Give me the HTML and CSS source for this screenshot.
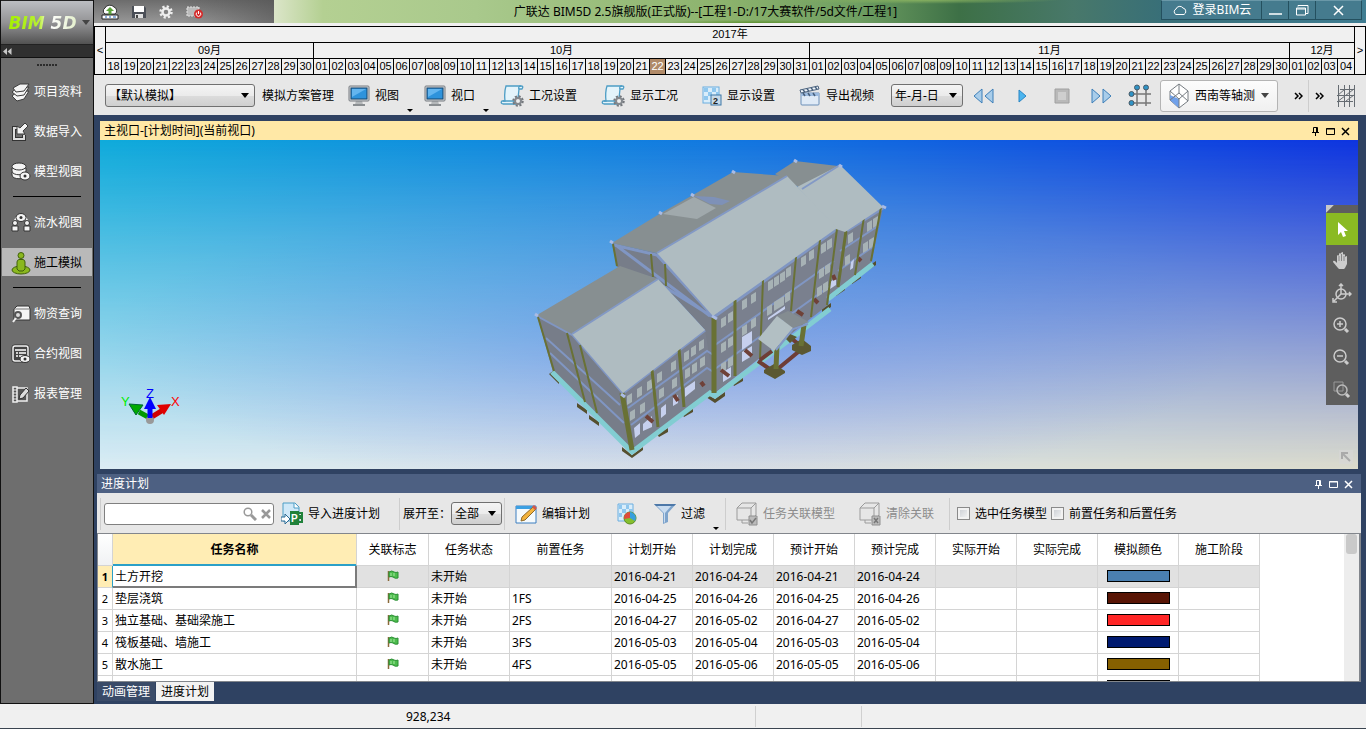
FILE: index.html
```html
<!DOCTYPE html>
<html lang="zh-CN">
<head>
    <meta charset="utf-8">
    <title>广联达 BIM5D 2.5旗舰版</title>
    <link rel="stylesheet" href="styles.css">
</head>
<body>
    <div class="app">
        <nav class="sidebar">
            <button class="logo"><span class="logo-text">BIM 5D</span><span class="caret"></span></button>
            <button class="collapse" aria-label="收起">
                <svg width="9" height="7" viewBox="0 0 9 7"><path d="M4 0v7L0 3.500zM8.500 0v7l-4-3.500z" fill="#c8c8c8"/></svg>
            </button>
            <div class="grip"></div>
            <a class="nav-item" href="#">
                <svg width="20" height="20" viewBox="0 0 20 20"><g fill="#f4f4f4" stroke="#3c3c3c"><path d="M1 14l5-4 12-1-5 8-7 2z"/><path d="M1 10l5-4 12-1-5 8-7 1z"/><path d="M2 6l7-4 9 0-5 7-8 1z"/></g></svg>
                项目资料
            </a>
            <a class="nav-item" href="#">
                <svg width="20" height="20" viewBox="0 0 20 20"><path d="M6 6H3v11h10v-4" fill="none" stroke="#333" stroke-width="4"/><path d="M6 6H3v11h10v-4" fill="none" stroke="#ddd" stroke-width="2"/><path d="M14 1l3 3-5 5 2 3H6V4l3 2z" fill="#f4f4f4" stroke="#3c3c3c"/></svg>
                数据导入
            </a>
            <a class="nav-item" href="#">
                <svg width="20" height="20" viewBox="0 0 20 20"><g fill="#f4f4f4" stroke="#333"><path d="M1 13c0 5 14 5 14 0v-3H1z"/><path d="M1 9c0 5 14 5 14 0V6H1z"/><ellipse cx="8" cy="4.500" rx="7" ry="3.500"/><ellipse cx="14" cy="14" rx="5" ry="4"/></g><circle cx="14" cy="14" r="1.500" fill="#333"/></svg>
                模型视图
            </a>
            <hr class="nav-line">
            <a class="nav-item" href="#">
                <svg width="20" height="20" viewBox="0 0 20 20"><path d="M3 9l3-5M17 9l-3-5" stroke="#eee" stroke-width="2"/><g fill="#f4f4f4" stroke="#333"><ellipse cx="10" cy="4.500" rx="5" ry="4"/><circle cx="4" cy="10" r="2.500"/><circle cx="16" cy="10" r="2.500"/><path d="M1 13h6v5H1zM13 13h6v5h-6z"/></g><circle cx="10" cy="4.500" r="1.500" fill="#333"/></svg>
                流水视图
            </a>
            <a class="nav-item active" href="#">
                <svg width="20" height="24" viewBox="0 0 20 24"><ellipse cx="10" cy="19" rx="9" ry="4" fill="#8ab81e" stroke="#41600b"/><path d="M6 18V11q0-2 2-2.500h4q2 .500 2 2.500v7l-2 2H8z" fill="#8ab81e" stroke="#41600b"/><circle cx="10" cy="4.500" r="3" fill="#8ab81e" stroke="#41600b"/></svg>
                施工模拟
            </a>
            <hr class="nav-line">
            <a class="nav-item" href="#">
                <svg width="20" height="20" viewBox="0 0 20 20"><path d="M3 5l3-3h12l1 3v11H3z" fill="#f4f4f4" stroke="#333"/><path d="M3 5h15" stroke="#777"/><circle cx="7" cy="11" r="3" fill="#ddd" stroke="#555" stroke-width="2"/><path d="M5 14l-3 4" stroke="#eee" stroke-width="2"/></svg>
                物资查询
            </a>
            <a class="nav-item" href="#">
                <svg width="20" height="20" viewBox="0 0 20 20"><rect x="2" y="2" width="15" height="15" rx="2" fill="none" stroke="#333" stroke-width="3"/><rect x="2" y="2" width="15" height="15" rx="2" fill="#444" stroke="#f4f4f4" stroke-width="1.500"/><path d="M4 6h11M5 9h2M8 9h7M5 12h2M8 12h5" stroke="#fff" stroke-width="1.500"/><ellipse cx="14" cy="15" rx="5" ry="3.500" fill="#f4f4f4" stroke="#333"/><circle cx="14" cy="15" r="1.500" fill="#333"/></svg>
                合约视图
            </a>
            <a class="nav-item" href="#">
                <svg width="20" height="20" viewBox="0 0 20 20"><path d="M2 3h4v15H2zM6 4h10v13H6z" fill="#555" stroke="#f0f0f0" stroke-width="1.500"/><path d="M2 6h4M2 9h4M2 12h4M2 15h4" stroke="#eee"/><path d="M8 15l1-4 6-7 3 3-6 7z" fill="#ddd" stroke="#333"/></svg>
                报表管理
            </a>
        </nav>

        <div class="main">
            <header class="titlebar">
                <div class="quick">
                    <button aria-label="上传"><svg width="18" height="16" viewBox="0 0 18 16"><path d="M4 10a3.500 3.500 0 0 1 0-6 5 4 0 0 1 9-1 4 4 0 0 1 1 7z" fill="#fff" stroke="#333"/><path d="M9 3l4 4h-2.500v4h-3V7H5z" fill="#5ca53b"/><path d="M1 11h16v4H1z" fill="#fff" stroke="#222"/><path d="M4 13h2M8 13h2M12 13h3" stroke="#1c63b8"/></svg></button>
                    <button aria-label="保存"><svg width="14" height="14" viewBox="0 0 14 14"><path d="M0 1h12l2 2v10H0z" fill="#4b4f57"/><path d="M2 1h10v6H2z" fill="#fff"/><path d="M3 9h8v4H3z" fill="#e0e0e0"/><path d="M4 10h2v3H4z" fill="#444"/></svg></button>
                    <button aria-label="设置"><svg width="14" height="14" viewBox="0 0 14 14"><circle cx="7" cy="7" r="5.500" fill="none" stroke="#eee" stroke-width="2.500" stroke-dasharray="2.200 2.120"/><circle cx="7" cy="7" r="3.500" fill="none" stroke="#eee" stroke-width="2.500"/></svg></button>
                    <button aria-label="退出"><svg width="17" height="14" viewBox="0 0 17 14"><path d="M1 2h12v9H1z" fill="#bbb" stroke="#e4e4e4" stroke-dasharray="2 1"/><circle cx="12.500" cy="9" r="4.500" fill="#d42a2a"/><path d="M12.500 6v3M10.800 7.500a2.300 2.300 0 1 0 3.400 0" fill="none" stroke="#fff"/></svg></button>
                </div>
                <h1 class="app-title">广联达 BIM5D 2.5旗舰版(正式版)--[工程1-D:/17大赛软件/5d文件/工程1]</h1>
                <div class="window-buttons">
                    <button class="login"><svg width="16" height="11" viewBox="0 0 16 11"><path d="M4 9.500a3 3 0 0 1 0-5.500 4 4 0 0 1 7-1 3.500 3.500 0 0 1 1 6.500z" fill="none" stroke="#fff"/></svg>登录BIM云</button>
                    <button aria-label="最小化"><svg width="13" height="12" viewBox="0 0 13 12"><path d="M0 10h13" stroke="#fff" stroke-width="1.500"/></svg></button>
                    <button aria-label="还原"><svg width="13" height="12" viewBox="0 0 13 12"><path d="M2 2.500V1.500h10v8h-2M.500 4h9v7h-9zM0 5h10" fill="none" stroke="#fff"/></svg></button>
                    <button class="close" aria-label="关闭"><svg width="11" height="11" viewBox="0 0 11 11"><path d="M1 1l9 9M10 1l-9 9" stroke="#fff" stroke-width="1.500"/></svg></button>
                </div>
            </header>

            <div class="timeline">
                <button class="scroll-days" aria-label="向前">&lt;</button>
                <table class="calendar">
                    <tbody>
                        <tr><th colspan="78">2017年</th></tr>
                        <tr><th colspan="13">09月</th><th colspan="31">10月</th><th colspan="30">11月</th><th colspan="4">12月</th></tr>
                        <tr>
                            <td>18</td><td>19</td><td>20</td><td>21</td><td>22</td><td>23</td><td>24</td><td>25</td><td>26</td><td>27</td><td>28</td><td>29</td><td>30</td>
                            <td>01</td><td>02</td><td>03</td><td>04</td><td>05</td><td>06</td><td>07</td><td>08</td><td>09</td><td>10</td><td>11</td><td>12</td><td>13</td><td>14</td><td>15</td><td>16</td><td>17</td><td>18</td><td>19</td><td>20</td><td>21</td><td class="today">22</td><td>23</td><td>24</td><td>25</td><td>26</td><td>27</td><td>28</td><td>29</td><td>30</td><td>31</td>
                            <td>01</td><td>02</td><td>03</td><td>04</td><td>05</td><td>06</td><td>07</td><td>08</td><td>09</td><td>10</td><td>11</td><td>12</td><td>13</td><td>14</td><td>15</td><td>16</td><td>17</td><td>18</td><td>19</td><td>20</td><td>21</td><td>22</td><td>23</td><td>24</td><td>25</td><td>26</td><td>27</td><td>28</td><td>29</td><td>30</td>
                            <td>01</td><td>02</td><td>03</td><td>04</td>
                        </tr>
                    </tbody>
                </table>
                <button class="scroll-days" aria-label="向后">&gt;</button>
            </div>

            <div class="toolbar">
                <div class="group">
                    <span class="select plan-select"><select aria-label="模拟方案"><option>【默认模拟】</option></select></span>
                    <button class="tool">模拟方案管理</button>
                    <button class="tool menu">
                        <svg width="22" height="22" viewBox="0 0 22 22"><path d="M8 15h6l1 5H7z" fill="#b5b8ba"/><path d="M5 20h12" stroke="#8a8e91" stroke-width="2"/><rect x="1" y="1" width="20" height="15" rx="1" fill="#d4d7d9" stroke="#777b80"/><rect x="3" y="3" width="16" height="11" fill="#2e93dc" stroke="#13446e"/><path d="M4 12V4h14z" fill="#63b5ef"/></svg>
                        视图
                    </button>
                    <button class="tool menu">
                        <svg width="22" height="22" viewBox="0 0 22 22"><path d="M8 15h6l1 5H7z" fill="#b5b8ba"/><path d="M5 20h12" stroke="#8a8e91" stroke-width="2"/><rect x="1" y="1" width="20" height="15" rx="1" fill="#d4d7d9" stroke="#777b80"/><rect x="3" y="3" width="16" height="11" fill="#2e93dc" stroke="#13446e"/><path d="M4 12V4h14z" fill="#63b5ef"/></svg>
                        视口
                    </button>
                    <button class="tool">
                        <svg width="24" height="24" viewBox="0 0 24 24"><path d="M6 2h15q3 0 1 3h-3q0 7-3 15H3q-3-1-1-3h3Q4 8 6 2z" fill="#e4f4fb" stroke="#4d9dc5" stroke-width="1.300"/><path d="M19 5q-1-3 2-3M3 17h11q-1 3 2 3" fill="none" stroke="#4d9dc5" stroke-width="1.300"/><circle cx="18" cy="17" r="4.500" fill="none" stroke="#74787d" stroke-width="2.500" stroke-dasharray="2 1.530"/><circle cx="18" cy="17" r="3" fill="#eee" stroke="#85898e" stroke-width="2"/></svg>
                        工况设置
                    </button>
                </div>
                <button class="tool">
                    <svg width="24" height="24" viewBox="0 0 24 24"><path d="M6 2h15q3 0 1 3h-3q0 7-3 15H3q-3-1-1-3h3Q4 8 6 2z" fill="#e4f4fb" stroke="#4d9dc5" stroke-width="1.300"/><path d="M19 5q-1-3 2-3M3 17h11q-1 3 2 3" fill="none" stroke="#4d9dc5" stroke-width="1.300"/><circle cx="18" cy="17" r="4.500" fill="none" stroke="#74787d" stroke-width="2.500" stroke-dasharray="2 1.530"/><circle cx="18" cy="17" r="3" fill="#eee" stroke="#85898e" stroke-width="2"/></svg>
                    显示工况
                </button>
                <button class="tool">
                    <svg width="20" height="20" viewBox="0 0 20 20"><rect x="1" y="1" width="16" height="16" fill="#d9edfa" stroke="#6aaee0"/><path d="M2 2h4v4H2zM10 2h4v4h-4zM6 6h4v4H6zM14 6h3v4h-3zM2 10h4v4H2zM10 10h4v4h-4z" fill="#8fc7ee"/><rect x="9" y="9" width="10" height="10" fill="#c8dae8" stroke="#3f78a8"/><text x="11" y="18" class="icon-digit">2</text></svg>
                    显示设置
                </button>
                <button class="tool">
                    <svg width="22" height="22" viewBox="0 0 22 22"><path d="M2 8h18v11q0 1-1 1H3q-1 0-1-1z" fill="#dfeaf6" stroke="#6b8fb8"/><path d="M2 8h18v3H2z" fill="#9cbbe0"/><path d="M1 5l18-4 1 3L2 8z" fill="#eef4fa" stroke="#48607c"/><path d="M4 5l2 2M8 4l2 2M12 3l2 2M16 2l2 2M4 8l2 3M9 8l2 3M14 8l2 3" stroke="#48607c" stroke-width="1.500"/></svg>
                    导出视频
                </button>
                <div class="group">
                    <span class="select unit-select"><select aria-label="时间单位"><option>年-月-日</option></select></span>
                    <div class="playback">
                        <button aria-label="后退"><svg width="22" height="16" viewBox="0 0 22 16"><path d="M9 1v14L1 8zM20 1v14l-8-7z" fill="#a9cdea" stroke="#3d7fb8"/></svg></button>
                        <button aria-label="播放"><svg width="10" height="14" viewBox="0 0 10 14"><path d="M1 1v12l7-6z" fill="#4db5ee" stroke="#2a86c4"/></svg></button>
                        <button aria-label="停止"><svg width="16" height="16" viewBox="0 0 16 16"><path d="M1 1h14v14H1z" fill="#b9b9b9" stroke="#a0a0a0"/><path d="M4 4h8v8H4z" fill="#cfcfcf"/></svg></button>
                        <button aria-label="前进"><svg width="22" height="16" viewBox="0 0 22 16"><path d="M2 1v14l8-7zM13 1v14l8-7z" fill="#a9cdea" stroke="#3d7fb8"/></svg></button>
                        <button aria-label="轴网"><svg width="24" height="24" viewBox="0 0 24 24"><path d="M9 4v18M18 4v18M3 10h20M3 19h20" stroke="#777" stroke-width="1.500"/><g fill="#2f93c6" stroke="#4a5a66"><circle cx="9" cy="3.500" r="2.500"/><circle cx="18" cy="3.500" r="2.500"/><circle cx="3.500" cy="10" r="2.500"/><circle cx="3.500" cy="19" r="2.500"/></g></svg></button>
                    </div>
                    <button class="axis">
                        <svg width="20" height="26" viewBox="0 0 20 26"><path d="M1 8l9-7 9 7v10l-9 7-9-8z" fill="#fff" stroke="#767c82"/><path d="M1 12l9 4v9l-9-8z" fill="#6fa0ea"/><path d="M1 8l9 8 9-8M10 16v9M10 1v9M1 17l9-7 9 8" fill="none" stroke="#767c82"/></svg>
                        西南等轴测
                        <span class="caret"></span>
                    </button>
                </div>
                <div class="overflow">
                    <button class="more" aria-label="更多"><svg width="9" height="8" viewBox="0 0 9 8"><path d="M1 1l3 3-3 3M5 1l3 3-3 3" fill="none" stroke="#000" stroke-width="1.500"/></svg></button>
                    <span class="sep"></span>
                    <button class="more" aria-label="更多"><svg width="9" height="8" viewBox="0 0 9 8"><path d="M1 1l3 3-3 3M5 1l3 3-3 3" fill="none" stroke="#000" stroke-width="1.500"/></svg></button>
                    <button aria-label="网格"><svg width="20" height="24" viewBox="0 0 20 24"><path d="M2.500 1v22M8.500 1v22M13.500 1v22M18.500 1v22M1 17.500h16M1 11.500h18M4 5.500h15M1 12l8-7M1 18L18 5M10 17l8-6" fill="none" stroke="#666c72"/></svg></button>
                </div>
            </div>

            <div class="dock">
                <section class="viewport">
                    <div class="view-title">
                        <h2>主视口-[计划时间](当前视口)</h2>
                        <div class="pane-buttons">
                            <button aria-label="固定"><svg width="9" height="9" viewBox="0 0 9 9"><path d="M2.500 5V.500h4V5M1 5.500h7M4.500 5.500V9M5.500 1v4" fill="none" stroke="currentColor"/></svg></button>
                            <button aria-label="最大化"><svg width="9" height="9" viewBox="0 0 9 9"><path d="M.500 1.500h8v6h-8zM0 2h9" fill="none" stroke="currentColor"/></svg></button>
                            <button aria-label="关闭"><svg width="9" height="9" viewBox="0 0 9 9"><path d="M1 1l7 7M8 1L1 8" stroke="currentColor" stroke-width="1.500"/></svg></button>
                        </div>
                    </div>
                    <div class="canvas">
                        <svg class="scene" viewBox="100 140 1258 329" preserveAspectRatio="xMidYMid slice">
                            <defs>
                                <path id="win" d="M0 0l5-3v9l-5 3z"/>
                            </defs>
                            <!-- footings -->
                            <g fill="#554f2e">
                                <path d="M549 374l4-3 6 8v5zM577 403l10 7v4l-10-7zM589 415l10 7v4l-10-7zM622 447l10 8 11-8v3l-11 8-10-7z"/>
                                <path d="M657 434l11-6v4l-9 5zM682 414l11-6v4l-9 5zM706 394l9 5 10-7v4l-10 7-9-6zM732 383l11-6v4l-9 5zM808 323l9-6v4l-9 6zM822 309l9-6v4l-9 6zM836 292l9-6v4l-9 6zM852 280l9-6v4l-9 6zM867 267l9-6v4l-9 6z"/>
                            </g>
                            <!-- walls -->
                            <g fill="#777d89">
                                <path d="M537 315l35 19 51 59 9 58-79-79z"/>
                                <path d="M612 243l45 10 56 63 2 77-10-5V330l-47-51-41-12z"/>
                                <path d="M837 228l8 3 38-24-12 57-43 33z" fill="#7a808e"/>
                                <path d="M713 316l124-88-9 77-113 88z" fill="#7a808e"/>
                                <path d="M623 393l82-63 10 60-83 61z" fill="#7a808e"/>
                            </g>
                            <!-- floor beams -->
                            <g fill="none" stroke="#8096c3" stroke-width="2">
                                <path d="M546 338l74 67M550 353l74 70M628 408l79-57 8 5M631 425l76-57 8 5"/>
                                <path d="M715 345l119-84M715 369l115-83M840 251l38-25M838 271l36-25"/>
                                <path d="M617 246l93 70M614 245l43 10 56 61M663 286l50 31" stroke-width="3"/>
                                <path d="M538 316l35 19 50 58 82-63M714 317l123-88M845 232l38-24" stroke-width="3"/>
                            </g>
                            <!-- windows -->
                            <g fill="#a7b2b5">
                                <use href="#win" x="627" y="396"/><use href="#win" x="637" y="389"/><use href="#win" x="647" y="382"/><use href="#win" x="657" y="374"/><use href="#win" x="671" y="363"/><use href="#win" x="684" y="353"/><use href="#win" x="691" y="348"/><use href="#win" x="699" y="342"/>
                                <use href="#win" x="630" y="412"/><use href="#win" x="640" y="405"/><use href="#win" x="659" y="390"/><use href="#win" x="672" y="380"/><use href="#win" x="685" y="370"/><use href="#win" x="692" y="365"/><use href="#win" x="700" y="359"/>
                                <use href="#win" x="721" y="319"/><use href="#win" x="728" y="314"/><use href="#win" x="742" y="301"/><use href="#win" x="751" y="295"/><use href="#win" x="768" y="282"/><use href="#win" x="774" y="278"/><use href="#win" x="780" y="274"/><use href="#win" x="786" y="269"/><use href="#win" x="801" y="258"/><use href="#win" x="809" y="252"/><use href="#win" x="821" y="245"/><use href="#win" x="827" y="241"/>
                                <use href="#win" x="721" y="344"/><use href="#win" x="728" y="339"/><use href="#win" x="742" y="327"/><use href="#win" x="751" y="320"/><use href="#win" x="767" y="307"/><use href="#win" x="774" y="302"/><use href="#win" x="779" y="299"/><use href="#win" x="785" y="294"/><use href="#win" x="819" y="270"/><use href="#win" x="825" y="266"/>
                                <use href="#win" x="721" y="364"/><use href="#win" x="728" y="359"/><use href="#win" x="817" y="288"/><use href="#win" x="823" y="284"/>
                                <use href="#win" x="848" y="235"/><use href="#win" x="867" y="223"/><use href="#win" x="873" y="219"/><use href="#win" x="845" y="257"/><use href="#win" x="863" y="244"/><use href="#win" x="869" y="240"/>
                            </g>
                            <g fill="#c6d0ee">
                                <path d="M634 428l6-5v11l-5 4zM643 424l9-8v11l-9 4zM661 408l5-4v10l-5 4zM673 398l5-3v8l-5 3zM685 388l10-7v8l-10 8zM723 372l8-5v10l-8 5zM742 337l10-6v12l-10 7zM742 352l10-6v10l-10 6zM768 318l17-12v3l-17 11zM830 282l6-4v7l-6 4zM851 262l3-3-1 9-3 2z"/>
                            </g>
                            <!-- ground beams seen through the openings -->
                            <path d="M646 416l7 6M674 395l4 6M701 382l3 4M721 370l8 6M745 350l7 6M797 311l6 4M814 299l4 4M833 275l2 5M858 258l3 3" stroke="#6f4138" stroke-width="4"/>
                            <!-- plinth -->
                            <path d="M552 372l80 80 78-59 5 3 45-34 32-24 38-29M828 299l45-35" fill="none" stroke="#82cdd2" stroke-width="5"/>
                            <!-- columns -->
                            <g stroke="#697135" stroke-width="2">
                                <path d="M538 317l16 54M567 333l18 69M580 345l17 68M613 244l4 22M651 254l2 23M665 264l1 22"/>
                                <path d="M763 280l-3 78M796 257l-5 54M820 240l-9 77M837 229l-10 76M864 217l-9 58M881 207l-10 54"/>
                                <path d="M652 370l6 57M679 349l5 58M735 300v76M846 231l-8 56" stroke-width="3"/>
                                <path d="M622 393l10 57M714 317v76" stroke-width="5"/>
                            </g>
                            <!-- roofs -->
                            <g fill="#878f91">
                                <path d="M537 315l83-49 38 13-86 55z"/>
                                <path d="M612 243l49-30 32-18 40-23 54 4-130 77z"/>
                                <path d="M775 174l20-13 43 5-36 23z"/>
                            </g>
                            <g fill="#afbcc1">
                                <path d="M572 334l86-55 47 51-82 63z"/>
                                <path d="M797 187l43-22 43 42-38 25-9-3z"/>
                                <path d="M657 253l130-77 50 52-124 88z"/>
                                <path d="M663 214l31-17 22 11-19 11z" fill="#a0a9ac"/>
                            </g>
                            <path d="M694 196l20 1 16 4-8 4-12-1z" fill="#7e91b8"/>
                            <path d="M572 334l86-55M657 253l130-77M802 189l38-24" fill="none" stroke="#8399c5" stroke-width="2"/>
                            <path d="M535 314l3 2M610 241l3 2M659 212l3 2M691 194l3 2M732 171l3 2M794 160l3 2M839 165l3 2M882 206l4 2M621 394l4 3M712 316l5 3" stroke="#a9bbe4" stroke-width="3"/>
                            <!-- porch -->
                            <path d="M758 361l16 11 29-24-12-10M760 360l12-9" fill="none" stroke="#6e3d36" stroke-width="4"/>
                            <path d="M764 370l10-6 11 7v2l-10 6-11-6zM792 345l10-6 9 7v5l-9 4-10-5zM785 338l5-4 7 3-7 6z" fill="#5b5832"/>
                            <path d="M777 345l-1 24M804 325l-3 21" stroke="#697135" stroke-width="5"/>
                            <path d="M777 316l11-5 21 11-16 6z" fill="#848c91"/>
                            <path d="M777 316l16 12-19 23-16-12z" fill="#b2bfc3"/>
                            <path d="M776 350l17-21 15-5" fill="none" stroke="#8399c5" stroke-width="2"/>
                            <!-- axes -->
                            <path d="M150 418l-11-6" stroke="#090" stroke-width="5"/>
                            <path d="M150 418l13-8" stroke="#d00000" stroke-width="5"/>
                            <path d="M129 404l14 1-7 10z" fill="#0a0" stroke="#063"/>
                            <path d="M171 404l-14 1 7 10z" fill="#e00000"/>
                            <circle cx="150" cy="420" r="4" fill="#999"/>
                            <path d="M150 418v-12" stroke="#00f" stroke-width="5"/>
                            <path d="M150 397l6 12h-12z" fill="#00f"/>
                            <text x="121" y="406" class="axis-y">Y</text>
                            <text x="146" y="398" class="axis-z">Z</text>
                            <text x="171" y="406" class="axis-x">X</text>
                        </svg>
                        <div class="palette">
                            <button class="on" aria-label="选择"><svg width="20" height="20" viewBox="0 0 20 20"><path d="M6 3v13l3-3 2 5 3-1-2-5h4z" fill="#fff"/></svg></button>
                            <button aria-label="平移"><svg width="20" height="20" viewBox="0 0 20 20"><path d="M6 17l-5-6q0-2 2-1l2 2V5q1-2 2 0V3q1-2 2 0V2q2-2 2 0v2q1-2 2 0v2q2-2 2 0v7l-2 4-1 1H7z" fill="#ccc"/><path d="M7 5v5M9.500 3v7M12 5v5" stroke="#888"/></svg></button>
                            <button aria-label="旋转"><svg width="20" height="20" viewBox="0 0 20 20"><circle cx="9" cy="11" r="5" fill="none" stroke="#ccc" stroke-width="1.500"/><path d="M9 1v10h10M9 11l-7 7M7 3l2-2 2 2M17 9l2 2-2 2M1 15v4h4" fill="none" stroke="#ccc" stroke-width="1.500"/></svg></button>
                            <button aria-label="放大"><svg width="20" height="20" viewBox="0 0 20 20"><circle cx="8" cy="9" r="6" fill="none" stroke="#ccc" stroke-width="1.500"/><path d="M5 9h6M8 6v6" stroke="#ccc" stroke-width="1.500"/><path d="M13 14l3 3" stroke="#ccc" stroke-width="3"/></svg></button>
                            <button aria-label="缩小"><svg width="20" height="20" viewBox="0 0 20 20"><circle cx="8" cy="9" r="6" fill="none" stroke="#ccc" stroke-width="1.500"/><path d="M5 9h6" stroke="#ccc" stroke-width="1.500"/><path d="M13 14l3 3" stroke="#ccc" stroke-width="3"/></svg></button>
                            <button aria-label="框选缩放"><svg width="20" height="20" viewBox="0 0 20 20"><path d="M2 3h9v9H2z" fill="none" stroke="#999"/><circle cx="10" cy="11" r="5" fill="none" stroke="#bbb" stroke-width="1.500"/><path d="M14 15l3 3" stroke="#ccc" stroke-width="3"/></svg></button>
                        </div>
                        <button class="corner" aria-label="展开"><svg width="10" height="10" viewBox="0 0 10 10"><path d="M1 7V1h6M1 1l8 8" fill="none" stroke="#aaa" stroke-width="2"/></svg></button>
                    </div>
                </section>

                <section class="panel">
                    <div class="panel-title">
                        <h2>进度计划</h2>
                        <div class="pane-buttons">
                            <button aria-label="固定"><svg width="9" height="9" viewBox="0 0 9 9"><path d="M2.500 5V.500h4V5M1 5.500h7M4.500 5.500V9M5.500 1v4" fill="none" stroke="currentColor"/></svg></button>
                            <button aria-label="最大化"><svg width="9" height="9" viewBox="0 0 9 9"><path d="M.500 1.500h8v6h-8zM0 2h9" fill="none" stroke="currentColor"/></svg></button>
                            <button aria-label="关闭"><svg width="9" height="9" viewBox="0 0 9 9"><path d="M1 1l7 7M8 1L1 8" stroke="currentColor" stroke-width="1.500"/></svg></button>
                        </div>
                    </div>
                    <div class="panel-toolbar">
                        <span class="sep"></span>
                        <div class="search">
                            <input type="text" aria-label="搜索">
                            <button aria-label="查找"><svg width="14" height="14" viewBox="0 0 14 14"><circle cx="5" cy="5" r="3.800" fill="none" stroke="#999" stroke-width="1.500"/><path d="M8 8l5 5" stroke="#999" stroke-width="3"/></svg></button>
                            <button aria-label="清除"><svg width="10" height="10" viewBox="0 0 10 10"><path d="M1 1l8 8M9 1L1 9" stroke="#999" stroke-width="2.500"/></svg></button>
                        </div>
                        <button class="tool">
                            <svg width="22" height="24" viewBox="0 0 22 24"><path d="M2 1h12l4 4v14H2z" fill="#cfe8f8" stroke="#4d9dc5"/><path d="M13 1v5h5" fill="#fff" stroke="#4d9dc5"/><path d="M0 15h4v-3l5 5-5 5v-3H0z" fill="#fff" stroke="#2b6a94"/><path d="M9 9h9v14H9z" fill="#20813a"/><path d="M18 11h3v3h-3M18 16h3v4h-3" fill="none" stroke="#20813a" stroke-width="2"/><text x="10" y="20" class="icon-p">P</text></svg>
                            导入进度计划
                        </button>
                        <span class="sep"></span>
                        <label for="expand">展开至：</label>
                        <span class="select level-select"><select id="expand"><option>全部</option></select></span>
                        <span class="sep"></span>
                        <button class="tool">
                            <svg width="22" height="20" viewBox="0 0 22 20"><path d="M1 2h20v17H1z" fill="#f6fafc" stroke="#3d7ec0"/><path d="M1 2h20v3H1z" fill="#3da0e2"/><path d="M6 17l1-4L18 3l3 2-11 11z" fill="#f3b33d" stroke="#8f6a2a"/><path d="M17 3l2-2 3 3-2 2z" fill="#d4574a"/></svg>
                            编辑计划
                        </button>
                        <button class="tool icon-only" aria-label="统计图"><svg width="20" height="22" viewBox="0 0 20 22"><path d="M1 1h15v17H1z" fill="#d9edfa" stroke="#6aaee0"/><path d="M2 2h3v4H2zM9 2h3v4H9zM5 6h4v4H5zM2 10h3v4H2zM12 6h4v3h-4z" fill="#8fc7ee"/><circle cx="13" cy="15" r="6" fill="#85bf2e" stroke="#5b8c20"/><path d="M13 15V9a6 6 0 0 1 5 9z" fill="#38a0de"/><path d="M13 15l-6 1a6 6 0 0 1 6-7z" fill="#df4b3d"/></svg></button>
                        <button class="tool menu">
                            <svg width="22" height="22" viewBox="0 0 22 22"><path d="M0 1h22l-8 9v9l-5 2V10z" fill="#7ea4cc"/><path d="M2 2h16l-7 8v9l-1 1V10z" fill="#c9dcf0"/><path d="M0 1h22l-2 2H2z" fill="#4d78a8"/></svg>
                            过滤
                        </button>
                        <span class="sep"></span>
                        <button class="tool" disabled>
                            <svg width="22" height="24" viewBox="0 0 22 24"><path d="M1 6l5-5h14v12l-5 5H1z" fill="#e6e6e6" stroke="#9b9b9b"/><path d="M1 6h14l5-5M15 6v12M6 18v3h6" fill="none" stroke="#9b9b9b"/><path d="M13 14h8v9h-8z" fill="#bbb" stroke="#909090"/><path d="M14 18l2 3 4-5" fill="none" stroke="#777" stroke-width="1.500"/></svg>
                            任务关联模型
                        </button>
                        <button class="tool" disabled>
                            <svg width="22" height="24" viewBox="0 0 22 24"><path d="M1 6l5-5h14v12l-5 5H1z" fill="#e6e6e6" stroke="#9b9b9b"/><path d="M1 6h14l5-5M15 6v12M6 18v3h6" fill="none" stroke="#9b9b9b"/><path d="M13 14h8v9h-8z" fill="#bbb" stroke="#909090"/><path d="M15 16l4 5M19 16l-4 5" fill="none" stroke="#777" stroke-width="1.500"/></svg>
                            清除关联
                        </button>
                        <span class="sep"></span>
                        <label class="check"><input type="checkbox">选中任务模型</label>
                        <label class="check"><input type="checkbox">前置任务和后置任务</label>
                    </div>
                    <div class="grid">
                        <svg class="defs" width="0" height="0"><symbol id="flag" viewBox="0 0 12 12"><path d="M1.500 1v10" stroke="#8a6a3a" stroke-width="1.500"/><path d="M2 2q3-2 5 0 2 1 4 0v6q-3 1-5-1-2-1-4 0z" fill="#4cbb4c" stroke="#2b8f35"/><path d="M4 3v3M7 3v3" stroke="#a4eaa0"/></symbol></svg>
                        <table class="tasks">
                            <colgroup>
                                <col class="col-num"><col class="col-name"><col class="col-flag"><col class="col-date"><col class="col-pre">
                                <col class="col-date"><col class="col-date"><col class="col-date"><col class="col-date"><col class="col-date"><col class="col-date"><col class="col-date"><col class="col-date">
                            </colgroup>
                            <thead>
                                <tr><th class="head-corner"></th><th class="sorted">任务名称</th><th>关联标志</th><th>任务状态</th><th>前置任务</th><th>计划开始</th><th>计划完成</th><th>预计开始</th><th>预计完成</th><th>实际开始</th><th>实际完成</th><th>模拟颜色</th><th>施工阶段</th></tr>
                            </thead>
                            <tbody>
                                <tr class="current"><th>1</th><td class="name">土方开挖</td><td class="mid"><svg class="flag"><use href="#flag"/></svg></td><td>未开始</td><td></td><td>2016-04-21</td><td>2016-04-24</td><td>2016-04-21</td><td>2016-04-24</td><td></td><td></td><td class="mid"><span class="swatch steel"></span></td><td></td></tr>
                                <tr><th>2</th><td class="name">垫层浇筑</td><td class="mid"><svg class="flag"><use href="#flag"/></svg></td><td>未开始</td><td>1FS</td><td>2016-04-25</td><td>2016-04-26</td><td>2016-04-25</td><td>2016-04-26</td><td></td><td></td><td class="mid"><span class="swatch maroon"></span></td><td></td></tr>
                                <tr><th>3</th><td class="name">独立基础、基础梁施工</td><td class="mid"><svg class="flag"><use href="#flag"/></svg></td><td>未开始</td><td>2FS</td><td>2016-04-27</td><td>2016-05-02</td><td>2016-04-27</td><td>2016-05-02</td><td></td><td></td><td class="mid"><span class="swatch red"></span></td><td></td></tr>
                                <tr><th>4</th><td class="name">筏板基础、墙施工</td><td class="mid"><svg class="flag"><use href="#flag"/></svg></td><td>未开始</td><td>3FS</td><td>2016-05-03</td><td>2016-05-04</td><td>2016-05-03</td><td>2016-05-04</td><td></td><td></td><td class="mid"><span class="swatch navy"></span></td><td></td></tr>
                                <tr><th>5</th><td class="name">散水施工</td><td class="mid"><svg class="flag"><use href="#flag"/></svg></td><td>未开始</td><td>4FS</td><td>2016-05-05</td><td>2016-05-06</td><td>2016-05-05</td><td>2016-05-06</td><td></td><td></td><td class="mid"><span class="swatch olive"></span></td><td></td></tr>
                                <tr><th></th><td></td><td></td><td></td><td></td><td></td><td></td><td></td><td></td><td></td><td></td><td class="mid"><span class="swatch black"></span></td><td></td></tr>
                            </tbody>
                        </table>
                        <div class="scrollbar"><div class="thumb"></div></div>
                    </div>
                </section>
                <div class="tabs">
                    <button>动画管理</button>
                    <button class="selected">进度计划</button>
                </div>
            </div>
        </div>
    </div>
    <footer class="statusbar">
        <span class="coords">928,234</span>
        <span></span>
        <span></span>
    </footer>
</body>
</html>
```
FILE: styles.css
```css
* { box-sizing: border-box; }
body {
    margin: 0;
    height: 100vh;
    display: flex;
    flex-direction: column;
    overflow: hidden;
    font: 12px/16px "Noto Sans", "Noto Sans CJK SC", sans-serif;
    color: #000;
    background: #f0f0f0;
}
button, select, input { font: inherit; color: inherit; }
button {
    display: flex;
    align-items: center;
    justify-content: center;
    margin: 0;
    padding: 0;
    border: none;
    background: none;
    white-space: nowrap;
}
h1, h2 { margin: 0; font-size: 12px; font-weight: normal; }
svg { display: block; flex: none; }
.app { flex: 1; display: flex; min-height: 0; }

/* sidebar */
.sidebar {
    width: 94px;
    flex: none;
    display: flex;
    flex-direction: column;
    background: #6e6e6e;
    border: 1px solid #111;
    border-width: 0 1px 1px;
}
.logo {
    height: 45px;
    gap: 5px;
    padding-left: 4px;
    border-top: 1px solid #222;
    border-bottom: 1px solid #222;
    background: linear-gradient(#bcbec2, #939395 50%, #525252);
}
.logo-text {
    font: italic bold 17px/24px "DejaVu Sans", sans-serif;
    background: linear-gradient(90deg, #a4f000, #b8f030 45%, #fff 60%, #e4f0cc);
    -webkit-background-clip: text;
    background-clip: text;
    color: transparent;
}
.caret {
    border: 4px solid transparent;
    border-top: 5px solid #444;
    border-bottom: 0;
}
.collapse {
    height: 13px;
    padding-left: 2px;
    justify-content: flex-start;
    background: #303030;
    border-bottom: 1px solid #111;
}
.grip {
    height: 2px;
    width: 20px;
    margin: 6px auto 5px;
    background: repeating-linear-gradient(90deg, #2c2c2c 0 2px, transparent 2px 3px);
}
.nav-item {
    height: 28px;
    margin: 6px 1px;
    padding: 1px 0 0 9px;
    display: flex;
    align-items: center;
    gap: 3px;
    color: #fff;
    text-decoration: none;
    white-space: nowrap;
}
.nav-item.active { background: #b9b9b9; color: #000; }
.nav-line {
    width: 68px;
    margin: 5px auto;
    border: none;
    border-top: 1px solid #000;
}

/* title bar */
.main { flex: 1; min-width: 0; display: flex; flex-direction: column; }
.titlebar {
    height: 23px;
    display: flex;
    align-items: stretch;
    background:
        radial-gradient(ellipse at 26% 110%, #6fa636 0, transparent 8%),
        radial-gradient(ellipse at 52% 100%, #5c9030 0, transparent 10%),
        radial-gradient(ellipse at 65% 0, #86b060 0, transparent 12%),
        linear-gradient(90deg, #dde6cb 14%, #b4d092 18%, #a9c98c 30%, #8bb26c 50%, #6f9f62 60%, #3d7046 68%, #48786a 77%, #386f78 84%, #3f7d92);
}
.quick {
    width: 180px;
    display: flex;
    align-items: center;
    gap: 13px;
    padding-left: 7px;
    background: linear-gradient(90deg, rgba(80, 80, 80, 0) 50%, rgba(80, 80, 80, .6)), linear-gradient(#6c6c6c, #989898);
}
.app-title {
    flex: 1;
    padding-right: 24px;
    text-align: center;
    line-height: 23px;
    white-space: nowrap;
}
.window-buttons {
    display: flex;
    height: 20px;
    margin: 0 4px 0 0;
    color: #fff;
    background: #457b8e;
    border: 1px solid #24505f;
    border-top-color: #6a98a8;
}
.window-buttons button { width: 27px; border-right: 1px solid #24505f; }
.window-buttons .login { width: 100px; gap: 5px; }
.window-buttons .close { width: 45px; border-right: none; }

/* timeline */
.timeline { display: flex; margin-top: 3px; height: 49px; }
.scroll-days {
    width: 11px;
    border: 1px solid #000;
    border-right: none;
    background: #f2f2f2;
    font: 11px "Liberation Mono", monospace;
}
.calendar + .scroll-days { border-right: 1px solid #000; border-left: none; }
.calendar {
    flex: 1;
    width: 0;
    height: 49px;
    table-layout: fixed;
    border-collapse: collapse;
    font: 11px/15px "Liberation Sans", "Noto Sans CJK SC", sans-serif;
}
.calendar th, .calendar td {
    height: 16px;
    padding: 0;
    border: 1px solid #000;
    font-weight: normal;
    text-align: center;
    white-space: nowrap;
}
.calendar .today { background: #b08a68; color: #fff; }

/* toolbar */
.toolbar {
    height: 40px;
    display: flex;
    align-items: center;
    gap: 10px;
    padding: 1px 10px 0 11px;
    background: #e7e7e7;
}
.group, .playback, .overflow { display: flex; align-items: center; }
.tool { position: relative; gap: 5px; padding: 0 7px; height: 32px; }
.tool:disabled { color: #8c8c8c; }
.menu { padding-right: 18px; }
.menu::after {
    content: "";
    position: absolute;
    right: 4px;
    bottom: 0;
    border: 3px solid transparent;
    border-top-color: #000;
    border-bottom: 0;
}
.select { position: relative; display: flex; }
.select::after {
    content: "";
    position: absolute;
    right: 6px;
    top: 9px;
    border: 4px solid transparent;
    border-top: 5px solid #000;
    border-bottom: 0;
    pointer-events: none;
}
.select select {
    appearance: none;
    width: 100%;
    height: 23px;
    padding: 0 3px;
    border: 1px solid #707070;
    border-radius: 3px;
    background: linear-gradient(#f4f4f4, #ebebeb 50%, #dcdcdc 51%, #cfcfcf);
}
.plan-select { width: 150px; }
.unit-select { width: 72px; }
.level-select { width: 51px; }
.playback { padding: 0 1px; }
.playback button { width: 39px; height: 30px; }
.axis {
    width: 118px;
    height: 32px;
    gap: 6px;
    border: 1px solid #b4b4b4;
    border-radius: 3px;
    background: linear-gradient(#fcfcfc, #f0f0f0);
}
.overflow { margin-left: auto; gap: 5px; }
.more { width: 10px; height: 20px; }
.more + button { margin-left: 7px; }
.sep { width: 1px; height: 32px; background: #cdcdcd; }
.icon-digit { font: bold 9px "Liberation Sans", sans-serif; fill: #222; }
.icon-p { font: bold 10px "Liberation Sans", sans-serif; fill: #fff; }

/* docked panes */
.dock {
    flex: 1;
    min-height: 0;
    display: flex;
    flex-direction: column;
    background: #2f4262;
    padding-top: 6px;
}
.viewport {
    flex: 1;
    min-height: 0;
    display: flex;
    flex-direction: column;
    margin: 0 8px 5px 6px;
}
.view-title, .panel-title {
    height: 19px;
    display: flex;
    justify-content: space-between;
    align-items: center;
    padding: 1px 8px 0 4px;
    background: #ffe8a6;
}
.panel-title { background: #4d6082; color: #fff; }
.pane-buttons { display: flex; gap: 6px; }
.canvas {
    flex: 1;
    min-height: 0;
    position: relative;
    background: linear-gradient(90deg, #0fabdb, #1277e0 50%, #0e34e0);
}
.canvas::before {
    content: "";
    position: absolute;
    inset: 0;
    background:
        radial-gradient(ellipse 45% 45% at 45% 62%, rgba(152, 140, 245, .45), rgba(152, 140, 245, 0)),
        linear-gradient(90deg, #dcecf4, #dce4e4 50%, #dcdccc);
    -webkit-mask-image: linear-gradient(transparent, #000);
    mask-image: linear-gradient(transparent, #000);
}
.scene { position: absolute; width: 100%; height: 100%; }
.scene text { font: 13px "Liberation Sans", sans-serif; }
.axis-x { fill: #f00; }
.axis-y { fill: #0e0; }
.axis-z { fill: #00f; }
.palette {
    position: absolute;
    right: 0;
    top: 65px;
    width: 32px;
    padding-top: 8px;
    background: linear-gradient(135deg, #c8c8c8 5px, #5e5e5e 6px);
}
.palette button { width: 32px; height: 32px; }
.palette .on { background: #8aba23; }
.corner {
    position: absolute;
    right: 5px;
    bottom: 5px;
    width: 14px;
    height: 14px;
    background: rgba(215, 215, 215, .6);
}
.panel { margin: 0 5px 0 3px; }
.panel-toolbar {
    height: 40px;
    display: flex;
    align-items: center;
    padding: 1px 0 0 3px;
    background: #e7e7e7;
}
.panel-toolbar .sep { margin-right: 3px; }
.panel-toolbar .tool + .sep { margin-left: 12px; }
.panel-toolbar .select + .sep, .panel-toolbar .menu + .sep { margin-left: 2px; }
.panel-toolbar .tool:disabled + .sep { margin-left: 8px; }
.panel-toolbar .tool + .tool { margin-left: 10px; }
.panel-toolbar .icon-only { padding: 0 0 0 10px; }
.search {
    width: 170px;
    height: 22px;
    display: flex;
    align-items: center;
    gap: 4px;
    padding-right: 2px;
    border: 1px solid #808080;
    border-radius: 3px;
    background: #fff;
}
.search input { flex: 1; min-width: 0; border: none; outline: none; background: none; }
.check { display: flex; align-items: center; gap: 5px; margin-left: 4px; }
.check input {
    appearance: none;
    width: 13px;
    height: 13px;
    margin: 0;
    border: 1px solid #8a8a8a;
    background: linear-gradient(135deg, #c6cad0, #f8f8f8);
    box-shadow: inset 0 0 0 2px #f2f2f2;
}

/* task grid */
.grid {
    height: 149px;
    display: flex;
    justify-content: space-between;
    overflow: hidden;
    border: 1px solid #82868c;
    border-right-width: 2px;
    background: #fff;
}
.defs { position: absolute; }
.tasks {
    width: 1162px;
    flex: none;
    table-layout: fixed;
    border-collapse: separate;
    border-spacing: 0;
}
.col-num { width: 15px; }
.col-name { width: 244px; }
.col-flag { width: 72px; }
.col-pre { width: 102px; }
.col-date { width: 81px; }
.tasks th, .tasks td {
    height: 22px;
    padding: 0 2px;
    border: 1px solid #d4d4d4;
    border-width: 0 1px 1px 0;
    text-align: left;
    white-space: nowrap;
}
.tasks th { font-weight: normal; text-align: center; }
.tasks thead th { height: 32px; }
.tasks tbody th { padding: 0; font-size: 11px; }
.tasks .head-corner { background: linear-gradient(#fff, #f0f2f4); }
.tasks .sorted { background: #ffedb4; font-weight: bold; border-bottom-color: #2ba0c8; box-shadow: inset 0 -1px #2ba0c8; }
.tasks .current td { background: #e1e1e1; }
.tasks .current th { background: #ffedb4; font-weight: bold; border-right-color: #2ba0c8; }
.tasks .current .name { background: #fff; border-color: #7b7b7b; box-shadow: inset -1px -1px #7b7b7b; }
.mid > * { display: block; margin: 0 auto 2px; }
.flag { width: 12px; height: 12px; }
.swatch { width: 63px; height: 12px; border: 1px solid #000; }
.steel { background: #4a7fb0; }
.maroon { background: #581505; }
.red { background: #ff2626; }
.navy { background: #001a70; }
.olive { background: #866000; }
.black { background: #000; }
.scrollbar { width: 15px; flex: none; background: #ededed; }
.thumb { width: 11px; height: 20px; margin: 0 auto; border-radius: 3px; background: #c9c9c9; }
.tabs { display: flex; gap: 1px; height: 22px; padding: 0 0 3px 3px; color: #fff; }
.tabs button { width: 58px; background: #3a4b68; }
.tabs .selected { background: #f2f2f2; color: #000; }

/* status bar */
.statusbar {
    height: 25px;
    flex: none;
    display: grid;
    grid-template-columns: 755fr 106fr 505fr;
    padding: 2px 0;
    line-height: 21px;
    border-bottom: 1px solid #3a4450;
}
.statusbar span + span { border-left: 1px solid #d0d0d0; }
.coords { padding-left: 406px; }
```
